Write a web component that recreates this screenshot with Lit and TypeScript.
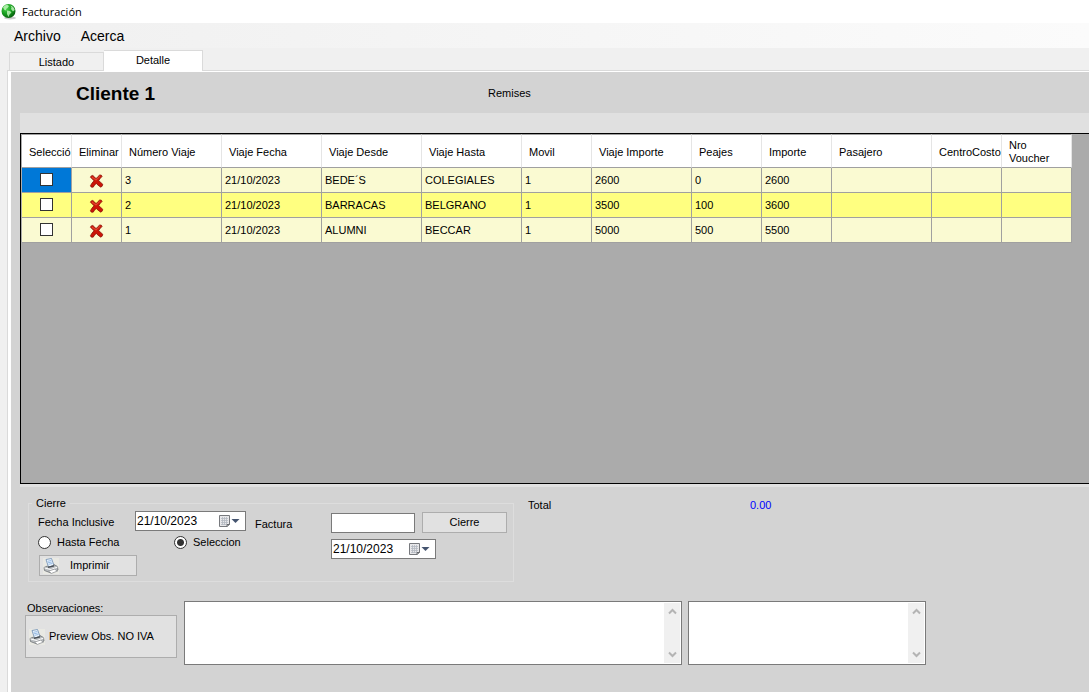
import { LitElement, html, css, svg } from "lit";
import { customElement, property, state } from "lit/decorators.js";

const printerIcon = html`<svg class="printer" viewBox="0 0 16 16" width="16" height="16" aria-hidden="true">
  <rect width="16" height="16" fill="#e9e9e3"/>
  <path d="M3 1.500 8.500.5 11 7.500 5.500 9Z" fill="#eef6ff" stroke="#7795b8" stroke-width=".9"/>
  <path d="M4.500 3.300 8.300 2.500M5 4.800 8.800 4M5.600 6.300 9.400 5.500" stroke="#7fabda" stroke-width=".8"/>
  <path d="M1 9.500 4.500 8 5.500 9 11 7.500 10.800 6.500 14.500 8.500 15 12 8 15 1.500 12.500Z" fill="#b9bdc0" stroke="#6c7175" stroke-width=".8"/>
  <path d="M1.500 9.900 8 11.600 14.500 9" fill="none" stroke="#fff"/>
  <path d="M5 9.300 11 7.800" stroke="#484e54" stroke-width="1.200"/>
  <path d="M5.500 13 11.500 11.200 14.500 13 8.500 15.400Z" fill="#fff" stroke="#868a8e" stroke-width=".7"/>
</svg>`;

@customElement("date-picker")
export class DatePicker extends LitElement {
  @property() value = "";
  @property() label = "";
  static styles = css`
    :host { display: block; }
    .box { display: flex; align-items: center; box-sizing: border-box; height: 20px; background: #fff; border: 1px solid #7a7a7a; }
    input { flex: 1; min-width: 0; width: 0; border: 0; outline: 0; padding: 0 1px; background: none; font: 12px "Liberation Sans", Arial, sans-serif; color: #000; }
    button { display: flex; border: 0; padding: 0 5px 0 0; background: none; }
  `;
  render() {
    return html`<div class="box">
      <input aria-label=${this.label} .value=${this.value} />
      <button aria-label="Abrir calendario">
        <svg width="22" height="14" viewBox="0 0 22 14">
          <path d="M1.500 1.500h10v9l-2.500 2h-7.500z" fill="#e8e8ea" stroke="#77797d"/>
          <path d="M3 4.500h7M3 6.500h7M3 8.500h7M3 10.500h5M4.500 3v8M6.500 3v8M8.500 3v8" stroke="#b2b7c0" stroke-width=".8"/>
          <path d="M9 12.500v-2h2.500" fill="none" stroke="#66686d"/>
          <path d="M13.500 5h8l-4 4z" fill="#44546f"/>
        </svg>
      </button>
    </div>`;
  }
}

@customElement("notes-box")
export class NotesBox extends LitElement {
  @property() label = "";
  static styles = css`
    :host { display: block; }
    .box { display: flex; box-sizing: border-box; height: 64px; background: #fff; border: 1px solid #7a7a7a; padding: 1px; }
    textarea { flex: 1; min-width: 0; border: 0; outline: 0; padding: 2px; resize: none; overflow: hidden; background: none; font: 11px "Liberation Sans", Arial, sans-serif; }
    .bar { display: flex; flex-direction: column; justify-content: space-between; width: 16px; background: #f0f0f0; }
    button { display: flex; justify-content: center; border: 0; padding: 5px 0; background: none; }
    path { fill: none; stroke: #b4b4b4; stroke-width: 2; }
  `;
  render() {
    return html`<div class="box">
      <textarea aria-label=${this.label}></textarea>
      <div class="bar">
        <button aria-label="Subir"><svg width="9" height="7"><path d="M1 5.500 4.500 2 8 5.500"/></svg></button>
        <button aria-label="Bajar"><svg width="9" height="7"><path d="M1 1.500 4.500 5 8 1.500"/></svg></button>
      </div>
    </div>`;
  }
}

interface Trip { id: number; cells: string[]; }

@customElement("app-root")
export class AppRoot extends LitElement {
  @state() private mode = "seleccion";

  private columns: [string, number][] = [
    ["Selecció", 50], ["Eliminar", 50], ["Número Viaje", 100], ["Viaje Fecha", 100],
    ["Viaje Desde", 100], ["Viaje Hasta", 100], ["Movil", 70], ["Viaje Importe", 100],
    ["Peajes", 70], ["Importe", 70], ["Pasajero", 100], ["CentroCosto", 70], ["Nro Voucher", 70],
  ];

  private trips: Trip[] = [
    { id: 3, cells: ["3", "21/10/2023", "BEDE´S", "COLEGIALES", "1", "2600", "0", "2600", "", "", ""] },
    { id: 2, cells: ["2", "21/10/2023", "BARRACAS", "BELGRANO", "1", "3500", "100", "3600", "", "", ""] },
    { id: 1, cells: ["1", "21/10/2023", "ALUMNI", "BECCAR", "1", "5000", "500", "5500", "", "", ""] },
  ];

  static styles = css`
    :host { display: flex; flex-direction: column; min-height: 100vh; overflow: hidden; background: #f0f0f0; color: #000; font: 11px/13px "Liberation Sans", Arial, sans-serif; }
    button, input { font: inherit; color: inherit; }
    .title { display: flex; align-items: center; gap: 5px; height: 23px; padding-left: 1px; background: #fff; font: 11px/16px "Open Sans", "Noto Sans", sans-serif; }
    .title h1 { margin: 0; font: inherit; }
    .menu { display: flex; align-items: center; gap: 20px; height: 25px; padding-left: 14px; background: linear-gradient(90deg, #f0f0f0, #fbfbfb); }
    .menu button { border: 0; padding: 0; background: none; font-size: 14px; line-height: 18px; }
    .tabs { display: flex; align-items: flex-end; height: 22px; padding-left: 9px; }
    .tab { box-sizing: border-box; border: 1px solid #dadada; border-bottom: 0; padding: 1px 0 0; background: #f0f0f0; width: 95px; height: 18px; }
    .tab.active { width: 99px; height: 21px; border-left: 0; margin-bottom: -1px; padding: 0 0 1px; background: #fff; }
    .page { flex: 1; display: flex; flex-direction: column; margin-left: 7px; border-left: 1px solid #dadada; border-top: 1px solid #dadada; background: #fff; padding: 1px 0 0 3px; }
    .tabs { z-index: 1; }
    .surface { flex: 1; display: flex; flex-direction: column; background: #d3d3d3; padding-left: 9px; }
    .client { display: flex; align-items: center; box-sizing: border-box; height: 41px; padding: 2px 0 0 56px; }
    .client h2 { margin: 0; width: 412px; font-size: 19px; line-height: 24px; font-weight: bold; }
    .strip { height: 20px; background: #e0e0e0; }
    .grid { flex: 1; min-height: 140px; border: 1px solid #000; border-right: 0; padding-left: 1px; background: #ababab; overflow: hidden; }
    table { table-layout: fixed; width: 1050px; border-collapse: separate; border-spacing: 0; }
    th, td { box-sizing: border-box; border-right: 1px solid #a0a0a0; border-bottom: 1px solid #a0a0a0; text-align: left; font-weight: normal; }
    th { height: 34px; padding: 2px 3px 0 7px; background: #fff; border-right-color: #e5e5e5; border-top: 1px solid #a0a0a0; }
    td { height: 25px; padding: 1px 3px 0; background: #fafad2; white-space: nowrap; }
    tr:nth-child(even) td { background: #ffff80; }
    td.center { text-align: center; padding: 0; }
    tbody tr:first-child td.first { background: #0078d7; }
    td button { display: block; margin: 0 auto; border: 0; padding: 2px 0 0; background: none; }
    td button svg { display: block; }
    input[type="checkbox"] { appearance: none; display: block; box-sizing: border-box; width: 13px; height: 13px; margin: 0 auto 1px; border: 1px solid #333; background: #fff; }
    input[type="checkbox"]:checked { box-shadow: inset 0 0 0 2px #fff; background: #333; }
    .foot { border-top: 3px solid #e0e0e0; padding: 9px 0 27px 5px; }
    .top { display: flex; align-items: flex-start; }
    fieldset { display: flex; box-sizing: border-box; width: 486px; min-width: 0; height: 86px; margin: 0 0 0 3px; border: 1px solid #dddddd; padding: 0 0 0 9px; }
    legend { padding: 1px 4px 0; margin-left: -6px; }
    .left { width: 207px; display: flex; flex-direction: column; align-items: flex-start; gap: 4px; padding-top: 1px; }
    .line { display: flex; align-items: center; height: 20px; }
    .caption { padding-top: 3px; }
    .line .caption { width: 97px; }
    .line date-picker { width: 111px; }
    .radios { height: 14px; }
    .radio { display: flex; align-items: center; gap: 6px; width: 136px; }
    .radio:last-child { width: auto; }
    input[type="radio"] { appearance: none; box-sizing: border-box; width: 13px; height: 13px; margin: 0; border: 1px solid #333; border-radius: 50%; background: #fff; }
    input[type="radio"]:checked { background: radial-gradient(circle, #333 3px, #fff 4px); }
    .push { display: flex; align-items: center; box-sizing: border-box; border: 1px solid #adadad; background: #e1e1e1; }
    .print { width: 98px; height: 21px; margin: 2px 0 0 1px; padding: 0 3px; gap: 11px; }
    .right { display: grid; grid-template-columns: 76px 84px 92px; row-gap: 6px; align-content: start; align-items: center; padding: 2px 0 0 10px; }
    .right .push { justify-content: center; height: 21px; margin-left: 7px; }
    .right .factura { box-sizing: border-box; width: 84px; height: 20px; border: 1px solid #7a7a7a; padding: 0 2px; background: #fff; outline: 0; }
    .right date-picker { grid-column: 2 / 4; width: 105px; }
    .total { display: flex; margin: 3px 0 0 14px; }
    .total span { width: 222px; }
    output { color: #0000ff; }
    .notes { display: flex; align-items: flex-start; margin-top: 19px; padding-right: 20px; }
    .actions { width: 152px; flex: none; margin-right: 7px; }
    .actions p { margin: 1px 0 0 2px; }
    .preview { width: 152px; height: 43px; padding: 0 3px; gap: 4px; }
    .wide { flex: 0 1 498px; margin-right: 6px; }
    .narrow { flex: 0 1 238px; }
  `;

  private cross = svg`<path d="M1.500 3.500Q2 1.500 4 1.500Q6 3 7.500 5Q9.500 2.500 11.500 1Q13.500.8 14 2.500Q12 4.500 10.300 7Q12.500 9 14.700 11Q14.500 13.500 12.500 14Q9.500 12 7.700 10Q5.500 12 4.500 14Q2 14.800 1.500 12.500Q3 9.500 5.300 7.300Q3.500 5 1.500 3.500Z" fill="#cc1508" stroke="#841008" stroke-width=".8"/><path d="M3 3 7.500 6.500 12 2.300" fill="none" stroke="#ee5a3c" stroke-width=".9"/>`;

  render() {
    return html`
      <header class="title">
        <svg width="16" height="18" viewBox="0 0 16 18" aria-hidden="true">
          <defs><radialGradient id="globe" cx=".35" cy=".3" r=".8"><stop offset="0" stop-color="#4fd44f"/><stop offset=".55" stop-color="#14991c"/><stop offset="1" stop-color="#07500d"/></radialGradient></defs>
          <ellipse cx="9" cy="15" rx="6" ry="1.500" fill="#ccc"/>
          <circle cx="7.500" cy="8" r="7" fill="url(#globe)"/>
          <path d="M2 4.500Q3.500 2 6 1.700L8 3 6.500 5 5 6 5.500 7.500 3.500 7Z M6 7.500 9 8 10.500 9.500 8.500 11.500 7.500 14 6 11Z M9.500 2.500Q13 3.500 13.700 7L12 8.500 10 6 10.500 4.500Z" fill="#bdf3b8" opacity=".85"/>
        </svg>
        <h1>Facturación</h1>
      </header>
      <nav class="menu"><button>Archivo</button><button>Acerca</button></nav>
      <div class="tabs" role="tablist">
        <button class="tab" role="tab" aria-selected="false">Listado</button>
        <button class="tab active" role="tab" aria-selected="true">Detalle</button>
      </div>
      <main class="page">
        <div class="surface">
          <div class="client"><h2>Cliente 1</h2><span>Remises</span></div>
          <div class="strip"></div>
          <div class="grid">
            <table>
              <colgroup>${this.columns.map(([, w]) => html`<col style="width:${w}px" />`)}</colgroup>
              <thead><tr>${this.columns.map(([name]) => html`<th scope="col">${name}</th>`)}</tr></thead>
              <tbody>${this.trips.map((t) => html`<tr>
                <td class="center first"><input type="checkbox" aria-label="Seleccionar viaje ${t.id}" /></td>
                <td class="center"><button aria-label="Eliminar viaje ${t.id}"><svg width="15" height="15" viewBox="0 0 16 16">${this.cross}</svg></button></td>
                ${t.cells.map((c) => html`<td>${c}</td>`)}
              </tr>`)}</tbody>
            </table>
          </div>
          <div class="foot">
            <div class="top">
              <fieldset>
                <legend>Cierre</legend>
                <div class="left">
                  <div class="line"><span class="caption">Fecha Inclusive</span><date-picker label="Fecha Inclusive" value="21/10/2023"></date-picker></div>
                  <div class="line radios">
                    <label class="radio"><input type="radio" name="mode" .checked=${this.mode === "hasta"} @change=${() => (this.mode = "hasta")} />Hasta Fecha</label>
                    <label class="radio"><input type="radio" name="mode" .checked=${this.mode === "seleccion"} @change=${() => (this.mode = "seleccion")} />Seleccion</label>
                  </div>
                  <button class="push print">${printerIcon}Imprimir</button>
                </div>
                <div class="right">
                  <label class="caption" for="factura">Factura</label>
                  <input id="factura" class="factura" />
                  <button class="push">Cierre</button>
                  <date-picker label="Fecha de factura" value="21/10/2023"></date-picker>
                </div>
              </fieldset>
              <div class="total"><span>Total</span><output>0.00</output></div>
            </div>
            <div class="notes">
              <div class="actions">
                <p>Observaciones:</p>
                <button class="push preview">${printerIcon}Preview Obs. NO IVA</button>
              </div>
              <notes-box class="wide" label="Observaciones"></notes-box>
              <notes-box class="narrow" label="Observaciones adicionales"></notes-box>
            </div>
          </div>
        </div>
      </main>`;
  }
}
